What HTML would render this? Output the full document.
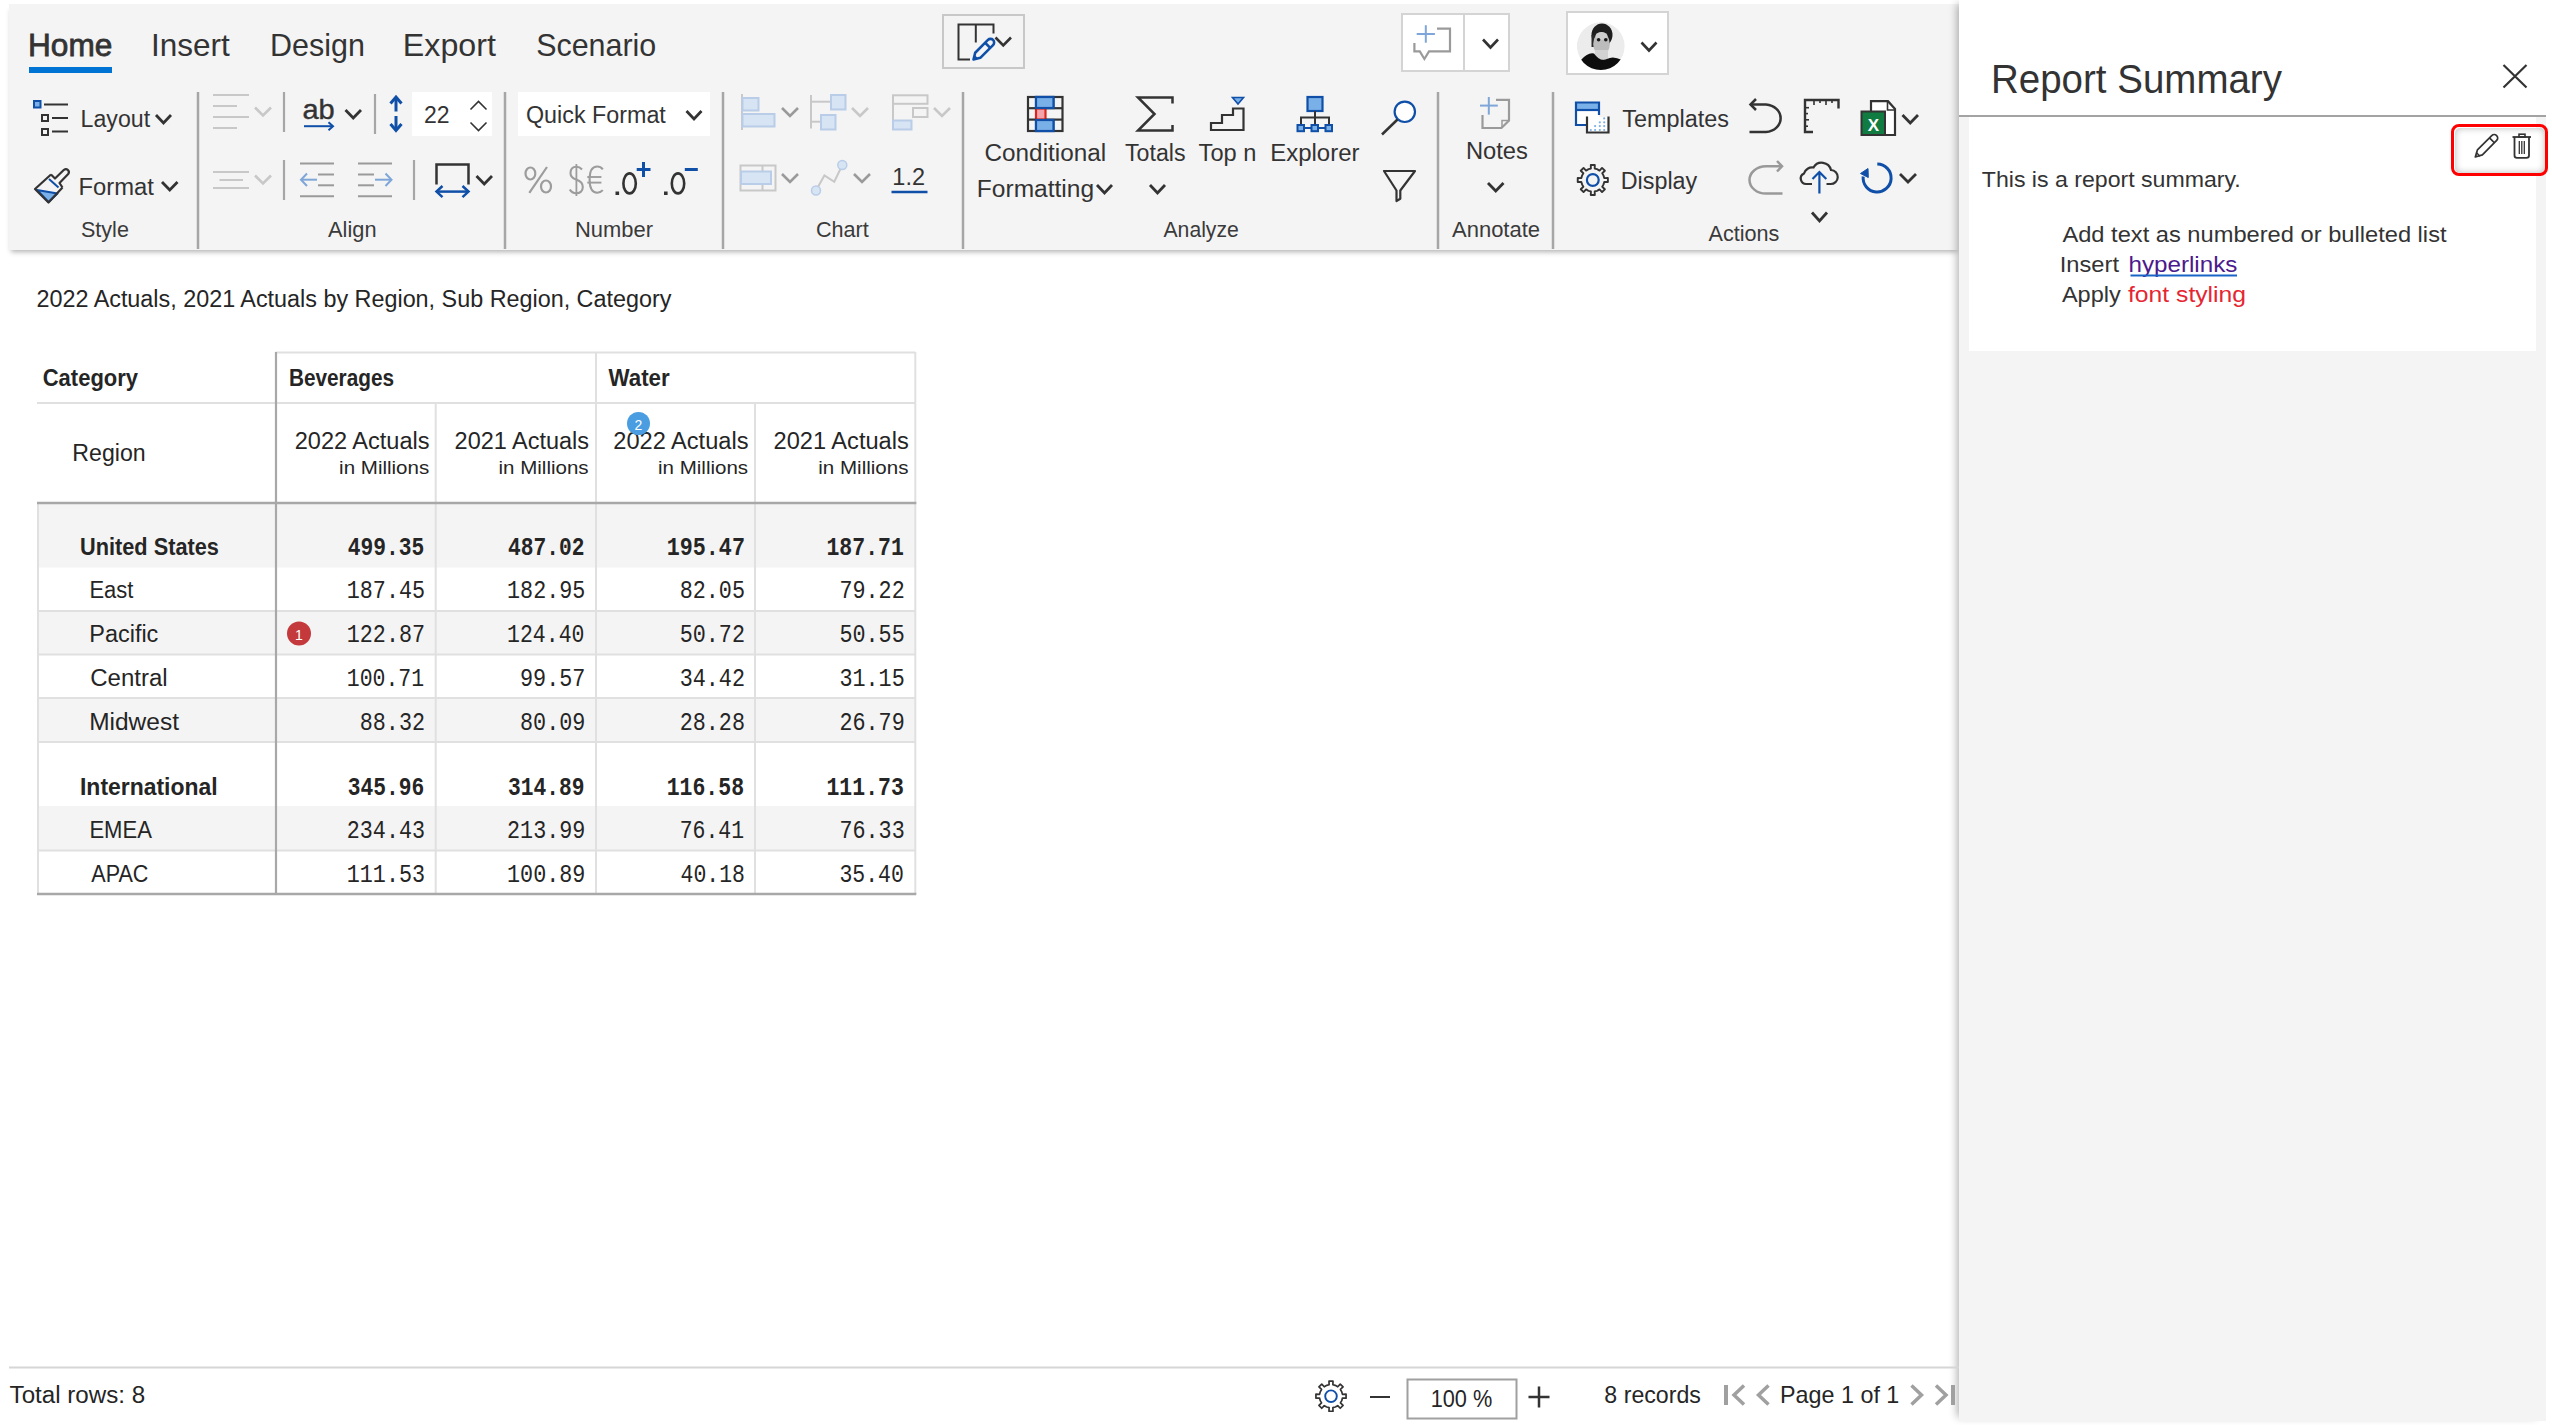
<!DOCTYPE html>
<html><head><meta charset="utf-8"><title>Report</title>
<style>
html,body{margin:0;padding:0;background:#fff;width:2552px;height:1425px;overflow:hidden;font-family:'Liberation Sans',sans-serif}
.ribbon{position:absolute;left:9px;top:4px;width:1950px;height:246px;background:#f4f4f4;box-shadow:0 4px 5px -2px rgba(0,0,0,0.3)}
.panel{position:absolute;left:1959px;top:0;width:587px;height:1421px;background:#f4f4f4;box-shadow:-6px 0 8px -4px rgba(0,0,0,0.3)}
.phead{position:absolute;left:0;top:0;width:587px;height:115px;background:#fff;border-bottom:2px solid #a3a3a3}
.card{position:absolute;left:10px;top:117px;width:567px;height:234px;background:#fff}
svg{position:absolute;left:0;top:0}
.tbar{position:absolute;left:2455px;top:128px;width:90px;height:45px;background:#fff;box-shadow:inset 0 0 7px rgba(0,0,0,0.28);border-radius:5px}
.redbox{position:absolute;left:2451px;top:124px;width:91px;height:46px;border:3px solid #f00;border-radius:8px}
</style></head><body>
<div class="ribbon"></div>
<div class="panel"><div class="phead"></div><div class="card"></div></div>
<div class="tbar"></div><div class="redbox"></div>
<svg width="2552" height="1425" viewBox="0 0 2552 1425">
<text x="28.04" y="56" font-size="32" fill="#333333" stroke="#333333" stroke-width="0.8" text-anchor="start" font-family="'Liberation Sans', sans-serif" textLength="84.31" lengthAdjust="spacingAndGlyphs">Home</text>
<text x="151.05" y="56" font-size="32" fill="#333333" text-anchor="start" font-family="'Liberation Sans', sans-serif" textLength="78.78" lengthAdjust="spacingAndGlyphs">Insert</text>
<text x="270.04" y="56" font-size="32" fill="#333333" text-anchor="start" font-family="'Liberation Sans', sans-serif" textLength="94.89" lengthAdjust="spacingAndGlyphs">Design</text>
<text x="402.88" y="56" font-size="32" fill="#333333" text-anchor="start" font-family="'Liberation Sans', sans-serif" textLength="93.0" lengthAdjust="spacingAndGlyphs">Export</text>
<text x="536.2" y="56" font-size="32" fill="#333333" text-anchor="start" font-family="'Liberation Sans', sans-serif" textLength="120.08" lengthAdjust="spacingAndGlyphs">Scenario</text>
<rect x="29" y="67" width="83" height="6" fill="#0074d4"/>
<rect x="943" y="15" width="81" height="53" fill="#f4f4f4" stroke="#c8c8c8" stroke-width="2"/>
<rect x="1402" y="14" width="107" height="57" fill="#fff" stroke="#d4d4d4" stroke-width="2"/>
<line x1="1464" y1="14" x2="1464" y2="71" stroke="#d4d4d4" stroke-width="2"/>
<rect x="1567" y="12" width="101" height="62" fill="#fff" stroke="#d4d4d4" stroke-width="2"/>
<line x1="198" y1="92" x2="198" y2="249" stroke="#a6a6a6" stroke-width="2.5"/>
<line x1="505" y1="92" x2="505" y2="249" stroke="#a6a6a6" stroke-width="2.5"/>
<line x1="723" y1="92" x2="723" y2="249" stroke="#a6a6a6" stroke-width="2.5"/>
<line x1="963" y1="92" x2="963" y2="249" stroke="#a6a6a6" stroke-width="2.5"/>
<line x1="1438" y1="92" x2="1438" y2="249" stroke="#a6a6a6" stroke-width="2.5"/>
<line x1="1553" y1="92" x2="1553" y2="249" stroke="#a6a6a6" stroke-width="2.5"/>
<line x1="284" y1="92" x2="284" y2="132" stroke="#a6a6a6" stroke-width="2.2"/>
<line x1="375" y1="94" x2="375" y2="134" stroke="#a6a6a6" stroke-width="2.2"/>
<line x1="284" y1="160" x2="284" y2="200" stroke="#a6a6a6" stroke-width="2.2"/>
<line x1="414" y1="160" x2="414" y2="200" stroke="#a6a6a6" stroke-width="2.2"/>
<text x="81.02" y="237" font-size="22" fill="#3a3a3a" text-anchor="start" font-family="'Liberation Sans', sans-serif" textLength="47.87" lengthAdjust="spacingAndGlyphs">Style</text>
<text x="328.0" y="237" font-size="22" fill="#3a3a3a" text-anchor="start" font-family="'Liberation Sans', sans-serif" textLength="48.51" lengthAdjust="spacingAndGlyphs">Align</text>
<text x="575.01" y="237" font-size="22" fill="#3a3a3a" text-anchor="start" font-family="'Liberation Sans', sans-serif" textLength="77.94" lengthAdjust="spacingAndGlyphs">Number</text>
<text x="815.92" y="237" font-size="22" fill="#3a3a3a" text-anchor="start" font-family="'Liberation Sans', sans-serif" textLength="52.88" lengthAdjust="spacingAndGlyphs">Chart</text>
<text x="1163.5" y="237" font-size="22" fill="#3a3a3a" text-anchor="start" font-family="'Liberation Sans', sans-serif" textLength="75.32" lengthAdjust="spacingAndGlyphs">Analyze</text>
<text x="1452.0" y="237" font-size="22" fill="#3a3a3a" text-anchor="start" font-family="'Liberation Sans', sans-serif" textLength="88.06" lengthAdjust="spacingAndGlyphs">Annotate</text>
<text x="1708.5" y="240.7" font-size="22" fill="#3a3a3a" text-anchor="start" font-family="'Liberation Sans', sans-serif" textLength="70.92" lengthAdjust="spacingAndGlyphs">Actions</text>
<text x="80.59" y="127" font-size="23" fill="#333333" text-anchor="start" font-family="'Liberation Sans', sans-serif" textLength="69.49" lengthAdjust="spacingAndGlyphs">Layout</text>
<path d="M156 115 L163.5 123 L171 115" stroke="#333333" stroke-width="2.8" fill="none" stroke-linecap="butt" stroke-linejoin="miter"/>
<text x="78.53" y="194.5" font-size="23" fill="#333333" text-anchor="start" font-family="'Liberation Sans', sans-serif" textLength="75.34" lengthAdjust="spacingAndGlyphs">Format</text>
<path d="M162 182 L169.75 190 L177.5 182" stroke="#333333" stroke-width="2.8" fill="none" stroke-linecap="butt" stroke-linejoin="miter"/>
<text x="302.42" y="118.6" font-size="27" fill="#333333" stroke="#333333" stroke-width="0.4" text-anchor="start" font-family="'Liberation Sans', sans-serif" textLength="32.28" lengthAdjust="spacingAndGlyphs">ab</text>
<path d="M345.5 110 L353.25 118 L361 110" stroke="#333333" stroke-width="2.8" fill="none" stroke-linecap="butt" stroke-linejoin="miter"/>
<rect x="412" y="92" width="80" height="44" fill="#fff"/>
<text x="424.0" y="122.6" font-size="23" fill="#333333" text-anchor="start" font-family="'Liberation Sans', sans-serif" textLength="25.59" lengthAdjust="spacingAndGlyphs">22</text>
<path d="M470.5 109.5 L478.5 101.5 L486.5 109.5" stroke="#333333" stroke-width="1.6" fill="none"/>
<path d="M470.5 122.5 L478.5 130.5 L486.5 122.5" stroke="#333333" stroke-width="1.6" fill="none"/>
<path d="M476.5 176 L484.25 184 L492 176" stroke="#333333" stroke-width="2.8" fill="none" stroke-linecap="butt" stroke-linejoin="miter"/>
<rect x="518" y="92" width="192" height="44" fill="#fff"/>
<text x="525.99" y="123.2" font-size="23" fill="#333333" text-anchor="start" font-family="'Liberation Sans', sans-serif" textLength="139.84" lengthAdjust="spacingAndGlyphs">Quick Format</text>
<path d="M686.5 111 L694.0 119 L701.5 111" stroke="#333333" stroke-width="2.8" fill="none" stroke-linecap="butt" stroke-linejoin="miter"/>
<ellipse cx="530.4" cy="173.5" rx="4.9" ry="6" fill="none" stroke="#9c9c9c" stroke-width="2.2"/>
<ellipse cx="546" cy="186.5" rx="5" ry="6" fill="none" stroke="#9c9c9c" stroke-width="2.2"/>
<line x1="529.3" y1="192.8" x2="547" y2="167" stroke="#9c9c9c" stroke-width="2.2"/>
<line x1="576.4" y1="164" x2="576.4" y2="196" stroke="#9c9c9c" stroke-width="1.8"/>
<path d="M582 169.5 C580 167.2 578.5 166.7 576.4 166.7 C572.5 166.7 570.5 169.5 570.5 173.2 C570.5 177.5 574 178.8 576.8 179.8 C580.5 181.2 582.8 183 582.8 187 C582.8 191 580 193.2 576.4 193.2 C573.3 193.2 571 191.8 569.8 189.5" stroke="#9c9c9c" stroke-width="2.1" fill="none"/>
<path d="M602.8 169.3 C601.3 167.3 599.5 166.5 597.2 166.5 C591.8 166.5 589.6 172.5 589.6 179.6 C589.6 186.7 591.8 192.7 597.2 192.7 C599.5 192.7 601.3 192 602.8 190.2" stroke="#9c9c9c" stroke-width="2.1" fill="none"/>
<line x1="587.3" y1="177" x2="601.4" y2="177" stroke="#9c9c9c" stroke-width="1.9"/>
<line x1="587.3" y1="182.6" x2="601.4" y2="182.6" stroke="#9c9c9c" stroke-width="1.9"/>
<ellipse cx="629.6" cy="183.4" rx="6.2" ry="10" fill="none" stroke="#333333" stroke-width="2.6"/>
<rect x="615.5" y="191.5" width="3.6" height="3.5" fill="#333333"/>
<ellipse cx="678" cy="183.4" rx="6.2" ry="10" fill="none" stroke="#333333" stroke-width="2.6"/>
<rect x="664" y="191.5" width="3.6" height="3.5" fill="#333333"/>
<path d="M636.7 169.5 H650.5 M643.5 162 V177" stroke="#0f4fa8" stroke-width="3" fill="none"/>
<line x1="684.8" y1="169.5" x2="697.8" y2="169.5" stroke="#0f4fa8" stroke-width="3"/>
<text x="892.36" y="185" font-size="23" fill="#333333" text-anchor="start" font-family="'Liberation Sans', sans-serif" textLength="32.65" lengthAdjust="spacingAndGlyphs">1.2</text>
<line x1="891.5" y1="192" x2="927.5" y2="192" stroke="#0f4fa8" stroke-width="2.5"/>
<path d="M782 108 L790.0 116 L798 108" stroke="#9a9a9a" stroke-width="2.6" fill="none" stroke-linecap="butt" stroke-linejoin="miter"/>
<path d="M852 108 L860.0 116 L868 108" stroke="#c8c8c8" stroke-width="2.6" fill="none" stroke-linecap="butt" stroke-linejoin="miter"/>
<path d="M934 108 L942.0 116 L950 108" stroke="#c8c8c8" stroke-width="2.6" fill="none" stroke-linecap="butt" stroke-linejoin="miter"/>
<path d="M782 174 L790.0 182 L798 174" stroke="#9a9a9a" stroke-width="2.6" fill="none" stroke-linecap="butt" stroke-linejoin="miter"/>
<path d="M854 174 L862.0 182 L870 174" stroke="#9a9a9a" stroke-width="2.6" fill="none" stroke-linecap="butt" stroke-linejoin="miter"/>
<text x="984.54" y="160.7" font-size="23" fill="#333333" text-anchor="start" font-family="'Liberation Sans', sans-serif" textLength="121.63" lengthAdjust="spacingAndGlyphs">Conditional</text>
<text x="976.87" y="197" font-size="23" fill="#333333" text-anchor="start" font-family="'Liberation Sans', sans-serif" textLength="117.2" lengthAdjust="spacingAndGlyphs">Formatting</text>
<path d="M1097 185 L1104.5 193 L1112 185" stroke="#333333" stroke-width="2.8" fill="none" stroke-linecap="butt" stroke-linejoin="miter"/>
<text x="1125.0" y="160.7" font-size="23" fill="#333333" text-anchor="start" font-family="'Liberation Sans', sans-serif" textLength="60.59" lengthAdjust="spacingAndGlyphs">Totals</text>
<path d="M1150 185 L1157.5 193 L1165 185" stroke="#333333" stroke-width="2.8" fill="none" stroke-linecap="butt" stroke-linejoin="miter"/>
<text x="1198.6" y="160.5" font-size="23" fill="#333333" text-anchor="start" font-family="'Liberation Sans', sans-serif" textLength="57.74" lengthAdjust="spacingAndGlyphs">Top n</text>
<text x="1270.22" y="160.5" font-size="23" fill="#333333" text-anchor="start" font-family="'Liberation Sans', sans-serif" textLength="89.27" lengthAdjust="spacingAndGlyphs">Explorer</text>
<text x="1465.94" y="159" font-size="23" fill="#333333" text-anchor="start" font-family="'Liberation Sans', sans-serif" textLength="61.96" lengthAdjust="spacingAndGlyphs">Notes</text>
<path d="M1488 183 L1495.75 191 L1503.5 183" stroke="#333333" stroke-width="2.8" fill="none" stroke-linecap="butt" stroke-linejoin="miter"/>
<text x="1622.3" y="127" font-size="23" fill="#333333" text-anchor="start" font-family="'Liberation Sans', sans-serif" textLength="106.56" lengthAdjust="spacingAndGlyphs">Templates</text>
<text x="1620.77" y="188.8" font-size="23" fill="#333333" text-anchor="start" font-family="'Liberation Sans', sans-serif" textLength="76.46" lengthAdjust="spacingAndGlyphs">Display</text>
<path d="M1902.5 115 L1910.25 123 L1918 115" stroke="#333333" stroke-width="2.8" fill="none" stroke-linecap="butt" stroke-linejoin="miter"/>
<path d="M1900 174 L1908.0 182 L1916 174" stroke="#333333" stroke-width="2.8" fill="none" stroke-linecap="butt" stroke-linejoin="miter"/>
<path d="M1812 212.5 L1819.5 221 L1827 212.5" stroke="#333333" stroke-width="2.8" fill="none" stroke-linecap="butt" stroke-linejoin="miter"/>
<path d="M995.5 37.5 L1003.25 45.5 L1011 37.5" stroke="#333333" stroke-width="2.6" fill="none" stroke-linecap="butt" stroke-linejoin="miter"/>
<path d="M1483 39.5 L1490.5 47.5 L1498 39.5" stroke="#333333" stroke-width="2.6" fill="none" stroke-linecap="butt" stroke-linejoin="miter"/>
<path d="M1641.5 42.5 L1649.0 50.5 L1656.5 42.5" stroke="#333333" stroke-width="2.6" fill="none" stroke-linecap="butt" stroke-linejoin="miter"/>
<text x="1991.01" y="93.1" font-size="40" fill="#333333" text-anchor="start" font-family="'Liberation Sans', sans-serif" textLength="290.93" lengthAdjust="spacingAndGlyphs">Report Summary</text>
<path d="M2503.5 65 L2526.5 87.5 M2526.5 65 L2503.5 87.5" stroke="#333333" stroke-width="2.2" fill="none"/>
<text x="1981.8" y="186.8" font-size="22.5" fill="#333333" text-anchor="start" font-family="'Liberation Sans', sans-serif" textLength="258.95" lengthAdjust="spacingAndGlyphs">This is a report summary.</text>
<text x="2062.4" y="241.6" font-size="22.5" fill="#333333" text-anchor="start" font-family="'Liberation Sans', sans-serif" textLength="384.16" lengthAdjust="spacingAndGlyphs">Add text as numbered or bulleted list</text>
<text x="2059.8" y="272" font-size="22.5" fill="#333333" text-anchor="start" font-family="'Liberation Sans', sans-serif" textLength="59.2" lengthAdjust="spacingAndGlyphs">Insert</text>
<text x="2128.45" y="272" font-size="22.5" fill="#4b1a8c" text-anchor="start" font-family="'Liberation Sans', sans-serif" textLength="108.89" lengthAdjust="spacingAndGlyphs">hyperlinks</text>
<line x1="2130.5" y1="275.5" x2="2237" y2="275.5" stroke="#1a64c8" stroke-width="2"/>
<text x="2061.9" y="301.8" font-size="22.5" fill="#333333" text-anchor="start" font-family="'Liberation Sans', sans-serif" textLength="58.89" lengthAdjust="spacingAndGlyphs">Apply</text>
<text x="2128.0" y="301.8" font-size="22.5" fill="#e52632" text-anchor="start" font-family="'Liberation Sans', sans-serif" textLength="118.01" lengthAdjust="spacingAndGlyphs">font styling</text>
<text x="36.48" y="307.2" font-size="23" fill="#252525" text-anchor="start" font-family="'Liberation Sans', sans-serif" textLength="634.93" lengthAdjust="spacingAndGlyphs">2022 Actuals, 2021 Actuals by Region, Sub Region, Category</text>
<rect x="38" y="503" width="877" height="64.5" fill="#f4f4f4"/>
<rect x="38" y="611" width="877" height="43.5" fill="#f4f4f4"/>
<rect x="38" y="698" width="877" height="44" fill="#f4f4f4"/>
<rect x="38" y="806" width="877" height="44.5" fill="#f4f4f4"/>
<line x1="275.5" y1="352.5" x2="915.3" y2="352.5" stroke="#e0e0e0" stroke-width="2"/>
<line x1="37" y1="403" x2="915.3" y2="403" stroke="#e0e0e0" stroke-width="2"/>
<line x1="38" y1="611" x2="915.3" y2="611" stroke="#e0e0e0" stroke-width="2"/>
<line x1="38" y1="654.5" x2="915.3" y2="654.5" stroke="#e0e0e0" stroke-width="2"/>
<line x1="38" y1="698" x2="915.3" y2="698" stroke="#e0e0e0" stroke-width="2"/>
<line x1="38" y1="742" x2="915.3" y2="742" stroke="#e0e0e0" stroke-width="2"/>
<line x1="38" y1="850.5" x2="915.3" y2="850.5" stroke="#e0e0e0" stroke-width="2"/>
<line x1="435.7" y1="403" x2="435.7" y2="894" stroke="#e0e0e0" stroke-width="2"/>
<line x1="755" y1="403" x2="755" y2="894" stroke="#e0e0e0" stroke-width="2"/>
<line x1="596" y1="352" x2="596" y2="894" stroke="#e0e0e0" stroke-width="2"/>
<line x1="915.3" y1="352" x2="915.3" y2="894" stroke="#e0e0e0" stroke-width="2"/>
<line x1="38" y1="503" x2="38" y2="894" stroke="#e0e0e0" stroke-width="2"/>
<line x1="37" y1="503" x2="916.3" y2="503" stroke="#a8a8a8" stroke-width="2.5"/>
<line x1="37" y1="894" x2="916.3" y2="894" stroke="#a8a8a8" stroke-width="2.5"/>
<line x1="276" y1="352" x2="276" y2="895" stroke="#a8a8a8" stroke-width="2.2"/>
<text x="42.74" y="385.8" font-size="23" fill="#252525" font-weight="bold" text-anchor="start" font-family="'Liberation Sans', sans-serif" textLength="95.37" lengthAdjust="spacingAndGlyphs">Category</text>
<text x="288.9" y="385.8" font-size="23" fill="#252525" font-weight="bold" text-anchor="start" font-family="'Liberation Sans', sans-serif" textLength="105.16" lengthAdjust="spacingAndGlyphs">Beverages</text>
<text x="608.5" y="385.5" font-size="23" fill="#252525" font-weight="bold" text-anchor="start" font-family="'Liberation Sans', sans-serif" textLength="61.15" lengthAdjust="spacingAndGlyphs">Water</text>
<text x="72.39" y="461" font-size="23" fill="#252525" text-anchor="start" font-family="'Liberation Sans', sans-serif" textLength="73.22" lengthAdjust="spacingAndGlyphs">Region</text>
<text x="294.78" y="449" font-size="23" fill="#252525" text-anchor="start" font-family="'Liberation Sans', sans-serif" textLength="134.79" lengthAdjust="spacingAndGlyphs">2022 Actuals</text>
<text x="339.12" y="474.4" font-size="19" fill="#252525" text-anchor="start" font-family="'Liberation Sans', sans-serif" textLength="90.1" lengthAdjust="spacingAndGlyphs">in Millions</text>
<text x="454.58" y="449" font-size="23" fill="#252525" text-anchor="start" font-family="'Liberation Sans', sans-serif" textLength="134.39" lengthAdjust="spacingAndGlyphs">2021 Actuals</text>
<text x="498.52" y="474.4" font-size="19" fill="#252525" text-anchor="start" font-family="'Liberation Sans', sans-serif" textLength="90.1" lengthAdjust="spacingAndGlyphs">in Millions</text>
<text x="613.37" y="449" font-size="23" fill="#252525" text-anchor="start" font-family="'Liberation Sans', sans-serif" textLength="135.09" lengthAdjust="spacingAndGlyphs">2022 Actuals</text>
<text x="658.02" y="474.4" font-size="19" fill="#252525" text-anchor="start" font-family="'Liberation Sans', sans-serif" textLength="90.1" lengthAdjust="spacingAndGlyphs">in Millions</text>
<text x="773.57" y="449" font-size="23" fill="#252525" text-anchor="start" font-family="'Liberation Sans', sans-serif" textLength="135.2" lengthAdjust="spacingAndGlyphs">2021 Actuals</text>
<text x="818.32" y="474.4" font-size="19" fill="#252525" text-anchor="start" font-family="'Liberation Sans', sans-serif" textLength="90.1" lengthAdjust="spacingAndGlyphs">in Millions</text>
<text x="80.06" y="554.7" font-size="23" fill="#252525" font-weight="bold" text-anchor="start" font-family="'Liberation Sans', sans-serif" textLength="138.87" lengthAdjust="spacingAndGlyphs">United States</text>
<text x="347.65" y="554.7" font-size="25" fill="#252525" font-weight="bold" text-anchor="start" font-family="'Liberation Mono', monospace" textLength="76.5" lengthAdjust="spacingAndGlyphs">499.35</text>
<text x="507.95" y="554.7" font-size="25" fill="#252525" font-weight="bold" text-anchor="start" font-family="'Liberation Mono', monospace" textLength="76.5" lengthAdjust="spacingAndGlyphs">487.02</text>
<text x="666.66" y="554.7" font-size="25" fill="#252525" font-weight="bold" text-anchor="start" font-family="'Liberation Mono', monospace" textLength="78.28" lengthAdjust="spacingAndGlyphs">195.47</text>
<text x="826.48" y="554.7" font-size="25" fill="#252525" font-weight="bold" text-anchor="start" font-family="'Liberation Mono', monospace" textLength="77.38" lengthAdjust="spacingAndGlyphs">187.71</text>
<text x="89.39" y="598" font-size="23" fill="#252525" text-anchor="start" font-family="'Liberation Sans', sans-serif" textLength="43.94" lengthAdjust="spacingAndGlyphs">East</text>
<text x="346.76" y="598" font-size="25" fill="#252525" text-anchor="start" font-family="'Liberation Mono', monospace" textLength="78.28" lengthAdjust="spacingAndGlyphs">187.45</text>
<text x="507.06" y="598" font-size="25" fill="#252525" text-anchor="start" font-family="'Liberation Mono', monospace" textLength="78.28" lengthAdjust="spacingAndGlyphs">182.95</text>
<text x="679.66" y="598" font-size="25" fill="#252525" text-anchor="start" font-family="'Liberation Mono', monospace" textLength="65.28" lengthAdjust="spacingAndGlyphs">82.05</text>
<text x="839.46" y="598" font-size="25" fill="#252525" text-anchor="start" font-family="'Liberation Mono', monospace" textLength="65.28" lengthAdjust="spacingAndGlyphs">79.22</text>
<text x="89.26" y="642.4" font-size="23" fill="#252525" text-anchor="start" font-family="'Liberation Sans', sans-serif" textLength="69.1" lengthAdjust="spacingAndGlyphs">Pacific</text>
<text x="346.76" y="642.4" font-size="25" fill="#252525" text-anchor="start" font-family="'Liberation Mono', monospace" textLength="78.28" lengthAdjust="spacingAndGlyphs">122.87</text>
<text x="507.08" y="642.4" font-size="25" fill="#252525" text-anchor="start" font-family="'Liberation Mono', monospace" textLength="77.38" lengthAdjust="spacingAndGlyphs">124.40</text>
<text x="679.66" y="642.4" font-size="25" fill="#252525" text-anchor="start" font-family="'Liberation Mono', monospace" textLength="65.28" lengthAdjust="spacingAndGlyphs">50.72</text>
<text x="839.46" y="642.4" font-size="25" fill="#252525" text-anchor="start" font-family="'Liberation Mono', monospace" textLength="65.28" lengthAdjust="spacingAndGlyphs">50.55</text>
<text x="90.26" y="686" font-size="23" fill="#252525" text-anchor="start" font-family="'Liberation Sans', sans-serif" textLength="77.45" lengthAdjust="spacingAndGlyphs">Central</text>
<text x="346.78" y="686" font-size="25" fill="#252525" text-anchor="start" font-family="'Liberation Mono', monospace" textLength="77.38" lengthAdjust="spacingAndGlyphs">100.71</text>
<text x="520.06" y="686" font-size="25" fill="#252525" text-anchor="start" font-family="'Liberation Mono', monospace" textLength="65.28" lengthAdjust="spacingAndGlyphs">99.57</text>
<text x="679.66" y="686" font-size="25" fill="#252525" text-anchor="start" font-family="'Liberation Mono', monospace" textLength="65.28" lengthAdjust="spacingAndGlyphs">34.42</text>
<text x="839.46" y="686" font-size="25" fill="#252525" text-anchor="start" font-family="'Liberation Mono', monospace" textLength="65.28" lengthAdjust="spacingAndGlyphs">31.15</text>
<text x="89.17" y="730" font-size="23" fill="#252525" text-anchor="start" font-family="'Liberation Sans', sans-serif" textLength="89.81" lengthAdjust="spacingAndGlyphs">Midwest</text>
<text x="359.76" y="730" font-size="25" fill="#252525" text-anchor="start" font-family="'Liberation Mono', monospace" textLength="65.28" lengthAdjust="spacingAndGlyphs">88.32</text>
<text x="520.06" y="730" font-size="25" fill="#252525" text-anchor="start" font-family="'Liberation Mono', monospace" textLength="65.28" lengthAdjust="spacingAndGlyphs">80.09</text>
<text x="679.66" y="730" font-size="25" fill="#252525" text-anchor="start" font-family="'Liberation Mono', monospace" textLength="65.28" lengthAdjust="spacingAndGlyphs">28.28</text>
<text x="839.46" y="730" font-size="25" fill="#252525" text-anchor="start" font-family="'Liberation Mono', monospace" textLength="65.28" lengthAdjust="spacingAndGlyphs">26.79</text>
<text x="80.0" y="794.5" font-size="23" fill="#252525" font-weight="bold" text-anchor="start" font-family="'Liberation Sans', sans-serif" textLength="137.61" lengthAdjust="spacingAndGlyphs">International</text>
<text x="347.65" y="794.5" font-size="25" fill="#252525" font-weight="bold" text-anchor="start" font-family="'Liberation Mono', monospace" textLength="76.5" lengthAdjust="spacingAndGlyphs">345.96</text>
<text x="507.95" y="794.5" font-size="25" fill="#252525" font-weight="bold" text-anchor="start" font-family="'Liberation Mono', monospace" textLength="76.5" lengthAdjust="spacingAndGlyphs">314.89</text>
<text x="666.68" y="794.5" font-size="25" fill="#252525" font-weight="bold" text-anchor="start" font-family="'Liberation Mono', monospace" textLength="77.38" lengthAdjust="spacingAndGlyphs">116.58</text>
<text x="826.48" y="794.5" font-size="25" fill="#252525" font-weight="bold" text-anchor="start" font-family="'Liberation Mono', monospace" textLength="77.38" lengthAdjust="spacingAndGlyphs">111.73</text>
<text x="89.38" y="838" font-size="23" fill="#252525" text-anchor="start" font-family="'Liberation Sans', sans-serif" textLength="62.5" lengthAdjust="spacingAndGlyphs">EMEA</text>
<text x="346.76" y="838" font-size="25" fill="#252525" text-anchor="start" font-family="'Liberation Mono', monospace" textLength="78.28" lengthAdjust="spacingAndGlyphs">234.43</text>
<text x="507.06" y="838" font-size="25" fill="#252525" text-anchor="start" font-family="'Liberation Mono', monospace" textLength="78.28" lengthAdjust="spacingAndGlyphs">213.99</text>
<text x="679.68" y="838" font-size="25" fill="#252525" text-anchor="start" font-family="'Liberation Mono', monospace" textLength="64.37" lengthAdjust="spacingAndGlyphs">76.41</text>
<text x="839.46" y="838" font-size="25" fill="#252525" text-anchor="start" font-family="'Liberation Mono', monospace" textLength="65.28" lengthAdjust="spacingAndGlyphs">76.33</text>
<text x="91.3" y="882" font-size="23" fill="#252525" text-anchor="start" font-family="'Liberation Sans', sans-serif" textLength="57.12" lengthAdjust="spacingAndGlyphs">APAC</text>
<text x="346.76" y="882" font-size="25" fill="#252525" text-anchor="start" font-family="'Liberation Mono', monospace" textLength="78.28" lengthAdjust="spacingAndGlyphs">111.53</text>
<text x="507.06" y="882" font-size="25" fill="#252525" text-anchor="start" font-family="'Liberation Mono', monospace" textLength="78.28" lengthAdjust="spacingAndGlyphs">100.89</text>
<text x="680.54" y="882" font-size="25" fill="#252525" text-anchor="start" font-family="'Liberation Mono', monospace" textLength="64.37" lengthAdjust="spacingAndGlyphs">40.18</text>
<text x="839.48" y="882" font-size="25" fill="#252525" text-anchor="start" font-family="'Liberation Mono', monospace" textLength="64.37" lengthAdjust="spacingAndGlyphs">35.40</text>
<circle cx="299" cy="633.5" r="12" fill="#c3393c"/>
<text x="299" y="640" font-size="14" fill="#fff" text-anchor="middle" font-family="'Liberation Sans', sans-serif">1</text>
<circle cx="638.5" cy="423.5" r="11.5" fill="#4a9de0"/>
<text x="638.5" y="430" font-size="14" fill="#fff" text-anchor="middle" font-family="'Liberation Sans', sans-serif">2</text>
<line x1="9" y1="1367.5" x2="1959" y2="1367.5" stroke="#d6d6d6" stroke-width="2"/>
<text x="9.6" y="1402.5" font-size="23" fill="#252525" text-anchor="start" font-family="'Liberation Sans', sans-serif" textLength="135.58" lengthAdjust="spacingAndGlyphs">Total rows: 8</text>
<line x1="1370" y1="1397" x2="1390" y2="1397" stroke="#333333" stroke-width="2"/>
<rect x="1407.5" y="1379.5" width="109" height="39" fill="#fff" stroke="#a0a0a0" stroke-width="2"/>
<text x="1430.71" y="1407.2" font-size="23" fill="#252525" text-anchor="start" font-family="'Liberation Sans', sans-serif" textLength="61.51" lengthAdjust="spacingAndGlyphs">100 %</text>
<path d="M1528.5 1397 H1549.5 M1539 1386.5 V1407.5" stroke="#333333" stroke-width="2.5" fill="none"/>
<text x="1604.39" y="1403" font-size="23" fill="#252525" text-anchor="start" font-family="'Liberation Sans', sans-serif" textLength="96.5" lengthAdjust="spacingAndGlyphs">8 records</text>
<text x="1780.06" y="1403.1" font-size="24" fill="#252525" text-anchor="start" font-family="'Liberation Sans', sans-serif" textLength="119.26" lengthAdjust="spacingAndGlyphs">Page 1 of 1</text>
<line x1="1726" y1="1385" x2="1726" y2="1405" stroke="#a0a0a0" stroke-width="4"/>
<path d="M1744 1385.5 L1734 1395 L1744 1404.5" stroke="#a0a0a0" stroke-width="3.5" fill="none"/>
<path d="M1768.5 1385.5 L1758.5 1395 L1768.5 1404.5" stroke="#a0a0a0" stroke-width="3.5" fill="none"/>
<path d="M1911.5 1385.5 L1921.5 1395 L1911.5 1404.5" stroke="#a0a0a0" stroke-width="3.5" fill="none"/>
<path d="M1936 1385.5 L1946 1395 L1936 1404.5" stroke="#a0a0a0" stroke-width="3.5" fill="none"/>
<line x1="1953" y1="1385" x2="1953" y2="1405" stroke="#a0a0a0" stroke-width="4"/>
<rect x="34" y="101" width="6.5" height="6.5" fill="#7ab0e8" stroke="#0f4fa8" stroke-width="2"/>
<line x1="44" y1="104.5" x2="68" y2="104.5" stroke="#333333" stroke-width="2"/>
<rect x="42" y="115" width="6" height="6" fill="none" stroke="#333333" stroke-width="2"/>
<line x1="52" y1="118" x2="68" y2="118" stroke="#333333" stroke-width="2"/>
<rect x="42" y="129" width="6" height="6" fill="none" stroke="#333333" stroke-width="2"/>
<line x1="52" y1="131.5" x2="68" y2="131.5" stroke="#333333" stroke-width="2"/>
<polygon points="37,190 57.5,193.5 48.5,202" fill="#7ab0e8" stroke="#0f4fa8" stroke-width="2" stroke-linejoin="round"/>
<path d="M51 174.5 L35 189 L48.5 202.5 L62.5 187.5" stroke="#333333" stroke-width="2.2" fill="none" stroke-linejoin="round"/>
<path d="M51 174.5 L55 178.5 L64 169.8 A3 3 0 0 1 68.2 174 L59.5 183 L62.5 187.5" stroke="#333333" stroke-width="2.2" fill="none" stroke-linejoin="round"/>
<line x1="49" y1="179" x2="58.5" y2="187.5" stroke="#0f4fa8" stroke-width="2"/>
<line x1="213" y1="95" x2="249" y2="95" stroke="#c8c8c8" stroke-width="2"/>
<line x1="213" y1="106" x2="237" y2="106" stroke="#c8c8c8" stroke-width="2"/>
<line x1="213" y1="117" x2="249" y2="117" stroke="#c8c8c8" stroke-width="2"/>
<line x1="213" y1="128" x2="237" y2="128" stroke="#c8c8c8" stroke-width="2"/>
<path d="M255 107.5 L263.0 115.5 L271 107.5" stroke="#c8c8c8" stroke-width="2.6" fill="none" stroke-linecap="butt" stroke-linejoin="miter"/>
<line x1="213" y1="172" x2="249" y2="172" stroke="#c8c8c8" stroke-width="2"/>
<line x1="219.5" y1="180" x2="243" y2="180" stroke="#c8c8c8" stroke-width="2"/>
<line x1="213" y1="188" x2="249" y2="188" stroke="#c8c8c8" stroke-width="2"/>
<path d="M255 175.5 L263.0 183.5 L271 175.5" stroke="#c8c8c8" stroke-width="2.6" fill="none" stroke-linecap="butt" stroke-linejoin="miter"/>
<line x1="304" y1="126.2" x2="333" y2="126.2" stroke="#0f4fa8" stroke-width="2"/>
<path d="M328.5 122.2 L333 126.2 L328.5 130.2" stroke="#0f4fa8" stroke-width="2" fill="none"/>
<path d="M396 97.5 V111.5 M396 116 V130" stroke="#0f4fa8" stroke-width="3" fill="none"/>
<path d="M390.5 103.5 L396 97 L401.5 103.5" stroke="#0f4fa8" stroke-width="3" fill="none"/>
<path d="M390.5 124 L396 130.5 L401.5 124" stroke="#0f4fa8" stroke-width="3" fill="none"/>
<line x1="300" y1="163.5" x2="334" y2="163.5" stroke="#9a9a9a" stroke-width="2"/>
<line x1="318" y1="174.5" x2="334" y2="174.5" stroke="#9a9a9a" stroke-width="2"/>
<line x1="318" y1="185.3" x2="334" y2="185.3" stroke="#9a9a9a" stroke-width="2"/>
<line x1="300" y1="196.3" x2="334" y2="196.3" stroke="#9a9a9a" stroke-width="2"/>
<line x1="301.5" y1="179.7" x2="317" y2="179.7" stroke="#7ea6d8" stroke-width="2"/>
<path d="M307 173.5 L301 179.7 L307 186" stroke="#7ea6d8" stroke-width="2" fill="none"/>
<line x1="358" y1="163.5" x2="392" y2="163.5" stroke="#9a9a9a" stroke-width="2"/>
<line x1="358" y1="174.5" x2="374" y2="174.5" stroke="#9a9a9a" stroke-width="2"/>
<line x1="358" y1="185.3" x2="374" y2="185.3" stroke="#9a9a9a" stroke-width="2"/>
<line x1="358" y1="196.3" x2="392" y2="196.3" stroke="#9a9a9a" stroke-width="2"/>
<line x1="375" y1="179.7" x2="391" y2="179.7" stroke="#7ea6d8" stroke-width="2"/>
<path d="M385.5 173.5 L391.5 179.7 L385.5 186" stroke="#7ea6d8" stroke-width="2" fill="none"/>
<path d="M436.5 184.5 V164.5 H468.5 V184.5" stroke="#333333" stroke-width="2.5" fill="none"/>
<line x1="437" y1="191.6" x2="468.5" y2="191.6" stroke="#0f4fa8" stroke-width="2.5"/>
<path d="M442.5 186 L436.5 191.6 L442.5 197.2 M462.5 186 L468.5 191.6 L462.5 197.2" stroke="#0f4fa8" stroke-width="2.5" fill="none"/>
<line x1="742" y1="94" x2="742" y2="130" stroke="#c8c8c8" stroke-width="2"/>
<rect x="742.5" y="98" width="16" height="12.5" fill="#d6e4f3" stroke="#b9cde8" stroke-width="2"/>
<rect x="742.5" y="114" width="32" height="12.5" fill="#d6e4f3" stroke="#b9cde8" stroke-width="2"/>
<line x1="811" y1="95" x2="811" y2="128.5" stroke="#c8c8c8" stroke-width="2"/>
<line x1="811" y1="101.7" x2="830" y2="101.7" stroke="#c8c8c8" stroke-width="2"/>
<line x1="811" y1="121.7" x2="820" y2="121.7" stroke="#c8c8c8" stroke-width="2"/>
<rect x="831" y="95" width="14.5" height="14.5" fill="#d6e4f3" stroke="#b9cde8" stroke-width="2"/>
<rect x="821" y="115" width="14.5" height="14.5" fill="#d6e4f3" stroke="#b9cde8" stroke-width="2"/>
<rect x="893" y="95.3" width="34.5" height="8.5" fill="none" stroke="#c8c8c8" stroke-width="2"/>
<rect x="913" y="108" width="14.5" height="9" fill="none" stroke="#c8c8c8" stroke-width="2"/>
<line x1="893" y1="95" x2="893" y2="120" stroke="#c8c8c8" stroke-width="2"/>
<rect x="893" y="120.5" width="18.5" height="9" fill="#d6e4f3" stroke="#b9cde8" stroke-width="2"/>
<rect x="740.5" y="165.5" width="35" height="25" fill="none" stroke="#c8c8c8" stroke-width="2"/>
<line x1="762.5" y1="165.5" x2="762.5" y2="190.5" stroke="#c8c8c8" stroke-width="2"/>
<rect x="741" y="171.5" width="30" height="12.5" fill="#d6e4f3" stroke="#b9cde8" stroke-width="2"/>
<path d="M816 190.5 L824.4 175.4 L834.3 181.8 L842.3 165" stroke="#c8c8c8" stroke-width="2" fill="none"/>
<circle cx="816" cy="190.5" r="4.5" fill="#d6e4f3" stroke="#b9cde8" stroke-width="1.5"/>
<circle cx="842.3" cy="165" r="4.5" fill="#d6e4f3" stroke="#b9cde8" stroke-width="1.5"/>
<rect x="1036" y="97" width="17.5" height="11" fill="#7ab0e8" stroke="#0f4fa8" stroke-width="2.2"/>
<rect x="1036" y="120" width="17.5" height="11" fill="#7ab0e8" stroke="#0f4fa8" stroke-width="2.2"/>
<rect x="1036" y="108.5" width="9.5" height="11" fill="#f4a3ab" stroke="#d9261c" stroke-width="2.2"/>
<rect x="1028" y="97" width="34.5" height="34" fill="none" stroke="#333333" stroke-width="2.2"/>
<line x1="1028" y1="108.2" x2="1036" y2="108.2" stroke="#333333" stroke-width="2.2"/>
<line x1="1053.5" y1="108.2" x2="1062.5" y2="108.2" stroke="#333333" stroke-width="2.2"/>
<line x1="1045.5" y1="108.2" x2="1053.5" y2="108.2" stroke="#333333" stroke-width="2.2"/>
<line x1="1028" y1="119.6" x2="1036" y2="119.6" stroke="#333333" stroke-width="2.2"/>
<line x1="1045.5" y1="119.6" x2="1062.5" y2="119.6" stroke="#333333" stroke-width="2.2"/>
<rect x="1036" y="97" width="17.5" height="11" fill="#7ab0e8" stroke="#0f4fa8" stroke-width="2.2"/>
<rect x="1036" y="120" width="17.5" height="11" fill="#7ab0e8" stroke="#0f4fa8" stroke-width="2.2"/>
<path d="M1172.5 103.5 V97.5 H1138 L1154.5 114 L1138 130.5 H1172.5 V125" stroke="#333333" stroke-width="2.5" fill="none" stroke-linejoin="miter"/>
<path d="M1211 130 V123 H1222 V115 H1233 V108.5 H1243.5 V130 Z" stroke="#333333" stroke-width="2.2" fill="none"/>
<path d="M1232.5 97.5 H1243.5 L1238 104 Z" stroke="#0f4fa8" stroke-width="1.6" fill="#7ab0e8"/>
<rect x="1307.5" y="97" width="15" height="14" fill="#7ab0e8" stroke="#0f4fa8" stroke-width="2.2"/>
<line x1="1315" y1="111" x2="1315" y2="125" stroke="#333333" stroke-width="2"/>
<path d="M1301 125 V117.5 H1329 V125" stroke="#333333" stroke-width="2" fill="none"/>
<line x1="1304.5" y1="128" x2="1325" y2="128" stroke="#0f4fa8" stroke-width="2"/>
<rect x="1297.5" y="125" width="6.5" height="6.2" fill="#7ab0e8" stroke="#0f4fa8" stroke-width="2"/>
<rect x="1311.5" y="125" width="6.5" height="6.2" fill="#7ab0e8" stroke="#0f4fa8" stroke-width="2"/>
<rect x="1325.5" y="125" width="6.5" height="6.2" fill="#7ab0e8" stroke="#0f4fa8" stroke-width="2"/>
<circle cx="1404.8" cy="111.8" r="10.2" fill="#fff" stroke="#0f4fa8" stroke-width="2.2"/>
<line x1="1382" y1="134.5" x2="1397.5" y2="119.5" stroke="#333333" stroke-width="2.5"/>
<path d="M1384 171 H1415 L1400.3 190.5 V198.8 L1396.5 201 V190.5 Z" stroke="#333333" stroke-width="2.2" fill="none" stroke-linejoin="round"/>
<line x1="1480" y1="105.6" x2="1497.8" y2="105.6" stroke="#7ea6d8" stroke-width="2"/>
<line x1="1488.8" y1="97" x2="1488.8" y2="114.6" stroke="#7ea6d8" stroke-width="2"/>
<path d="M1496 99.8 H1509 V120.5 L1501.5 128 H1482.5 V115" stroke="#9a9a9a" stroke-width="2.2" fill="none" stroke-linejoin="miter"/>
<path d="M1509 120.5 H1502 V128" stroke="#9a9a9a" stroke-width="1.5" fill="none"/>
<rect x="1576" y="102.5" width="23" height="22.5" fill="#fff"/>
<rect x="1576" y="102.5" width="23" height="8" fill="#7ab0e8"/>
<path d="M1587 125 H1576 V102.5 H1599 V115" stroke="#0f4fa8" stroke-width="2.2" fill="none"/>
<line x1="1576" y1="110" x2="1599" y2="110" stroke="#0f4fa8" stroke-width="2.2"/>
<rect x="1587" y="117" width="21.5" height="15.5" fill="#fff"/>
<path d="M1587 116.5 V132.5 H1608.5 V116.5" stroke="#333333" stroke-width="2.2" fill="none"/>
<circle cx="1604.2" cy="118.4" r="1.1" fill="#7ab0e8"/>
<circle cx="1604.2" cy="122.3" r="1.1" fill="#7ab0e8"/>
<circle cx="1599.8" cy="122.3" r="1.1" fill="#7ab0e8"/>
<circle cx="1604.2" cy="126.1" r="1.1" fill="#7ab0e8"/>
<circle cx="1599.8" cy="126.1" r="1.1" fill="#7ab0e8"/>
<circle cx="1595.1" cy="126.1" r="1.1" fill="#7ab0e8"/>
<circle cx="1604.2" cy="130" r="1.1" fill="#7ab0e8"/>
<circle cx="1599.8" cy="130" r="1.1" fill="#7ab0e8"/>
<circle cx="1595.1" cy="130" r="1.1" fill="#7ab0e8"/>
<circle cx="1590.8" cy="130" r="1.1" fill="#7ab0e8"/>
<path d="M1603.60 175.77 L1604.24 178.10 L1607.87 178.00 L1607.87 182.00 L1604.24 181.90 L1603.60 184.23 L1603.43 184.65 L1602.24 186.74 L1604.87 189.24 L1602.04 192.07 L1599.54 189.44 L1597.45 190.63 L1597.03 190.80 L1594.70 191.44 L1594.80 195.07 L1590.80 195.07 L1590.90 191.44 L1588.57 190.80 L1588.15 190.63 L1586.06 189.44 L1583.56 192.07 L1580.73 189.24 L1583.36 186.74 L1582.17 184.65 L1582.00 184.23 L1581.36 181.90 L1577.73 182.00 L1577.73 178.00 L1581.36 178.10 L1582.00 175.77 L1582.17 175.35 L1583.36 173.26 L1580.73 170.76 L1583.56 167.93 L1586.06 170.56 L1588.15 169.37 L1588.57 169.20 L1590.90 168.56 L1590.80 164.93 L1594.80 164.93 L1594.70 168.56 L1597.03 169.20 L1597.45 169.37 L1599.54 170.56 L1602.04 167.93 L1604.87 170.76 L1602.24 173.26 L1603.43 175.35 Z" stroke="#333333" stroke-width="1.9" fill="none" stroke-linejoin="round"/>
<circle cx="1592.8" cy="180" r="5.9" fill="none" stroke="#0f4fa8" stroke-width="2.2"/>
<path d="M1750.5 104.5 H1766 A16 13.8 0 0 1 1766 132 H1749.5" stroke="#333333" stroke-width="2.5" fill="none"/>
<path d="M1756 99 L1750.5 104.5 L1756 110" stroke="#333333" stroke-width="2.5" fill="none"/>
<path d="M1782 166.2 H1766 A16.5 13.7 0 0 0 1766 193.6 H1782.5" stroke="#999999" stroke-width="2.5" fill="none"/>
<path d="M1777 161 L1782 166.2 L1777 171.5" stroke="#999999" stroke-width="2.5" fill="none"/>
<path d="M1813 132 H1805 V100 H1838.5 V108.5" stroke="#333333" stroke-width="2.4" fill="none"/>
<line x1="1814" y1="100" x2="1814" y2="105" stroke="#333333" stroke-width="1.6"/>
<line x1="1820" y1="100" x2="1820" y2="103" stroke="#333333" stroke-width="1.6"/>
<line x1="1826" y1="100" x2="1826" y2="105" stroke="#333333" stroke-width="1.6"/>
<line x1="1832" y1="100" x2="1832" y2="103" stroke="#333333" stroke-width="1.6"/>
<line x1="1805" y1="107.7" x2="1809" y2="107.7" stroke="#333333" stroke-width="1.6"/>
<line x1="1805" y1="113.6" x2="1808" y2="113.6" stroke="#333333" stroke-width="1.6"/>
<line x1="1805" y1="119.8" x2="1809" y2="119.8" stroke="#333333" stroke-width="1.6"/>
<line x1="1805" y1="126.2" x2="1808" y2="126.2" stroke="#333333" stroke-width="1.6"/>
<path d="M1871 111 V101.2 H1888 L1895 109 V135 H1885" stroke="#333333" stroke-width="2.2" fill="#fff"/>
<path d="M1887.5 101.2 V110 H1895" stroke="#333333" stroke-width="1.6" fill="none"/>
<rect x="1861.5" y="111.5" width="23.5" height="23.5" fill="#107c41" stroke="#333333" stroke-width="2"/>
<text x="1873.3" y="130.5" font-size="17" fill="#fff" font-weight="bold" text-anchor="middle" font-family="'Liberation Sans', sans-serif">X</text>
<path d="M1812 184 H1806.5 A5.5 5.5 0 0 1 1804 173.5 A8.5 8.5 0 0 1 1813.5 167.5 A9.5 9.5 0 0 1 1831 170 A7 7 0 0 1 1830.5 184 H1826.5" stroke="#333333" stroke-width="2.2" fill="none"/>
<path d="M1819.4 193.5 V172.5 M1812.5 179 L1819.4 172 L1826.3 179" stroke="#0f4fa8" stroke-width="2.2" fill="none"/>
<path d="M1877.3 164 A14 14 0 1 1 1863.2 176.5" stroke="#0f4fa8" stroke-width="3" fill="none"/>
<polygon points="1860.5,173.5 1868,168.5 1868.3,177.5" fill="#0f4fa8" stroke="#0f4fa8" stroke-width="1" stroke-linejoin="round"/>
<path d="M970 59.5 H958.5 V24.5 H993.5 V33.5" stroke="#333333" stroke-width="2" fill="none"/>
<line x1="975.8" y1="24.5" x2="975.8" y2="42.5" stroke="#333333" stroke-width="2"/>
<path d="M973.50 59.50 L980.29 57.80 L993.05 45.05 A3.6 3.6 0 0 0 987.95 39.95 L975.20 52.71 Z" stroke="#0f4fa8" stroke-width="2.6" fill="#f4f4f4" stroke-linejoin="round"/>
<line x1="990.22" y1="47.87" x2="985.13" y2="42.78" stroke="#0f4fa8" stroke-width="2.6"/>
<polygon points="973,60 974.2,54.5 978.5,58.8" fill="#0f4fa8"/>
<line x1="1416.7" y1="34" x2="1434.9" y2="34" stroke="#7ea6d8" stroke-width="2"/>
<line x1="1425.8" y1="25.2" x2="1425.8" y2="42.7" stroke="#7ea6d8" stroke-width="2"/>
<path d="M1437 28.6 H1450 V51.4 H1429 L1424.4 59 L1419.8 51.4 H1414.4 V43" stroke="#9a9a9a" stroke-width="2.2" fill="none" stroke-linejoin="miter"/>
<defs><clipPath id="av"><circle cx="1600.8" cy="46.1" r="24"/></clipPath></defs>
<g clip-path="url(#av)"><circle cx="1600.8" cy="46.1" r="24" fill="#ececec"/><ellipse cx="1602" cy="35" rx="10.5" ry="11.5" fill="#1e1e1e"/><rect x="1591.5" y="35" width="3" height="12" fill="#2a2a2a"/><ellipse cx="1601.5" cy="44" rx="8.3" ry="11.5" fill="#bcbcbc"/><ellipse cx="1601.5" cy="36" rx="6" ry="4" fill="#cfcfcf"/><circle cx="1598.6" cy="39.8" r="1.8" fill="#1a1a1a"/><circle cx="1605.8" cy="39.8" r="1.8" fill="#1a1a1a"/><rect x="1595" y="50" width="13" height="9" fill="#d2d2d2"/><path d="M1581 60 Q1588 52 1594 53.5 Q1600 62 1607 59 Q1613 55.5 1622 60 L1622 76 L1581 76 Z" fill="#0d0d0d"/></g>
<path d="M2475.30 157.00 L2482.37 154.86 L2496.68 140.47 A3.5 3.5 0 0 0 2491.72 135.53 L2477.40 149.92 Z" stroke="#333333" stroke-width="1.7" fill="#fff" stroke-linejoin="round"/>
<line x1="2494.42" y1="142.74" x2="2489.46" y2="137.8" stroke="#333333" stroke-width="1.7"/>
<line x1="2476.3" y1="152.5" x2="2480" y2="156.2" stroke="#333333" stroke-width="1.5"/>
<line x1="2512.5" y1="137" x2="2531" y2="137" stroke="#333333" stroke-width="1.8"/>
<rect x="2519" y="134.2" width="6" height="2.8" fill="none" stroke="#333333" stroke-width="1.6"/>
<path d="M2514.5 137 V155.5 Q2514.5 157.8 2517 157.8 H2526.5 Q2529 157.8 2529 155.5 V137" stroke="#333333" stroke-width="1.8" fill="none"/>
<line x1="2519.3" y1="141" x2="2519.3" y2="154" stroke="#333333" stroke-width="1.3"/>
<line x1="2521.8" y1="141" x2="2521.8" y2="154" stroke="#333333" stroke-width="1.3"/>
<line x1="2524.3" y1="141" x2="2524.3" y2="154" stroke="#333333" stroke-width="1.3"/>
<path d="M1341.80 1391.97 L1342.44 1394.30 L1346.07 1394.20 L1346.07 1398.20 L1342.44 1398.10 L1341.80 1400.43 L1341.63 1400.85 L1340.44 1402.94 L1343.07 1405.44 L1340.24 1408.27 L1337.74 1405.64 L1335.65 1406.83 L1335.23 1407.00 L1332.90 1407.64 L1333.00 1411.27 L1329.00 1411.27 L1329.10 1407.64 L1326.77 1407.00 L1326.35 1406.83 L1324.26 1405.64 L1321.76 1408.27 L1318.93 1405.44 L1321.56 1402.94 L1320.37 1400.85 L1320.20 1400.43 L1319.56 1398.10 L1315.93 1398.20 L1315.93 1394.20 L1319.56 1394.30 L1320.20 1391.97 L1320.37 1391.55 L1321.56 1389.46 L1318.93 1386.96 L1321.76 1384.13 L1324.26 1386.76 L1326.35 1385.57 L1326.77 1385.40 L1329.10 1384.76 L1329.00 1381.13 L1333.00 1381.13 L1332.90 1384.76 L1335.23 1385.40 L1335.65 1385.57 L1337.74 1386.76 L1340.24 1384.13 L1343.07 1386.96 L1340.44 1389.46 L1341.63 1391.55 Z" stroke="#333333" stroke-width="1.7" fill="none" stroke-linejoin="round"/>
<circle cx="1331" cy="1396.2" r="5.8" fill="none" stroke="#0f4fa8" stroke-width="1.9"/>
</svg>
</body></html>
